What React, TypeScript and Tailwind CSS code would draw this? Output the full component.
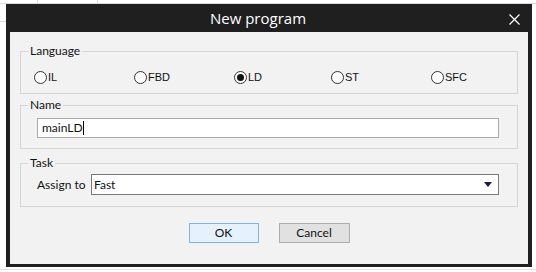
import { useState } from "react";

const langs = [
  { id: "IL", w: "w-[100px]" },
  { id: "FBD", w: "w-[100px]" },
  { id: "LD", w: "w-[97px]" },
  { id: "ST", w: "w-[100px]" },
  { id: "SFC", w: "w-[60px]" },
];

function Radio({ label, checked, onClick, w }: { label: string; checked: boolean; onClick: () => void; w: string }) {
  return (
    <button type="button" onClick={onClick} className={`flex items-center ${w} h-[16px]`}>
      <span className="flex h-[13px] w-[13px] items-center justify-center rounded-full border border-[#333] bg-white">
        {checked && <span className="h-[7px] w-[7px] rounded-full bg-[#111]" />}
      </span>
      <span className="ml-[1px] font-['Liberation_Sans',sans-serif] text-[11px] text-[#111]">{label}</span>
    </button>
  );
}

export default function App() {
  const [lang, setLang] = useState("LD");
  const [name, setName] = useState("mainLD");

  return (
    <div className="relative h-[272px] w-[536px] overflow-hidden bg-white font-['Lato',sans-serif]">
      {/* fond de la feuille derrière */}
      <div className="absolute left-0 top-[3px] h-px w-full bg-[#d8d8e0]" />
      <div className="absolute left-[37px] top-0 h-[4px] w-px bg-[#d8d8e0]" />
      <div className="absolute left-[97px] top-0 h-[4px] w-px bg-[#d8d8e0]" />
      <div className="absolute left-0 top-[21px] h-px w-[6px] bg-[#d8d8e0]" />
      <div className="absolute left-0 top-[269px] h-px w-full bg-[#e0e0e0]" />

      <div className="relative ml-[6px] mt-[4px] w-[526px] bg-[#1f1f1f] px-[4px] pb-[3px]">
        {/* barre de titre */}
        <div className="relative flex h-[28px] items-center justify-center pr-[22px]">
          <span className="font-['Open_Sans',sans-serif] text-[15px] text-white">New program</span>
          <svg className="absolute right-[8px] top-[10px]" width="11" height="11" viewBox="0 0 11 11">
            <path d="M0.5 0.5 L10.5 10.5 M10.5 0.5 L0.5 10.5" stroke="#fff" strokeWidth="1.2" />
          </svg>
        </div>

        <div className="h-[232px] bg-[#f2f2f2] pt-[11px] text-[12px] text-[#111]">
          <fieldset className="ml-[10px] w-[498px] border border-[#d5d5d5] px-[13px] pb-[8px] pt-[10px]">
            <legend className="ml-[-6px] px-[2px] leading-[16px]">Language</legend>
            <div className="flex">
              {langs.map((l) => (
                <Radio key={l.id} label={l.id} w={l.w} checked={lang === l.id} onClick={() => setLang(l.id)} />
              ))}
            </div>
          </fieldset>

          <fieldset className="ml-[10px] mt-[3px] w-[498px] border border-[#d5d5d5] px-[16px] pb-[10px] pt-[5px]">
            <legend className="ml-[-9px] px-[2px] leading-[16px]">Name</legend>
            <div className="flex h-[20px] w-[462px] items-center border border-[#a9a9a9] bg-white pl-[4px]">
              <input
                value={name}
                onChange={(e) => setName(e.target.value)}
                className="w-[6ch] bg-transparent text-[12px] outline-none"
              />
              <span className="ml-[-1px] h-[14px] w-px bg-black" />
            </div>
          </fieldset>

          <fieldset className="ml-[10px] mt-[6px] w-[498px] border border-[#d5d5d5] px-[16px] pb-[11px] pt-[3px]">
            <legend className="ml-[-9px] px-[2px] leading-[16px]">Task</legend>
            <div className="flex items-center">
              <span className="w-[54px] shrink-0">Assign to</span>
              <div className="flex h-[21px] w-[408px] items-center justify-between border border-[#7a7a7a] bg-white pl-[2px] pr-[6px]">
                <span>Fast</span>
                <svg width="8" height="5" viewBox="0 0 8 5">
                  <path d="M0 0 H8 L4 5 Z" fill="#1c1c3c" />
                </svg>
              </div>
            </div>
          </fieldset>

          <div className="mt-[16px] flex justify-center gap-[20px]">
            <button type="button" className="h-[20px] w-[70px] border border-[#7eb4ea] bg-[#e5f1fb]">
              OK
            </button>
            <button type="button" className="h-[20px] w-[71px] border border-[#adadad] bg-[#e1e1e1]">
              Cancel
            </button>
          </div>
        </div>
      </div>
    </div>
  );
}
